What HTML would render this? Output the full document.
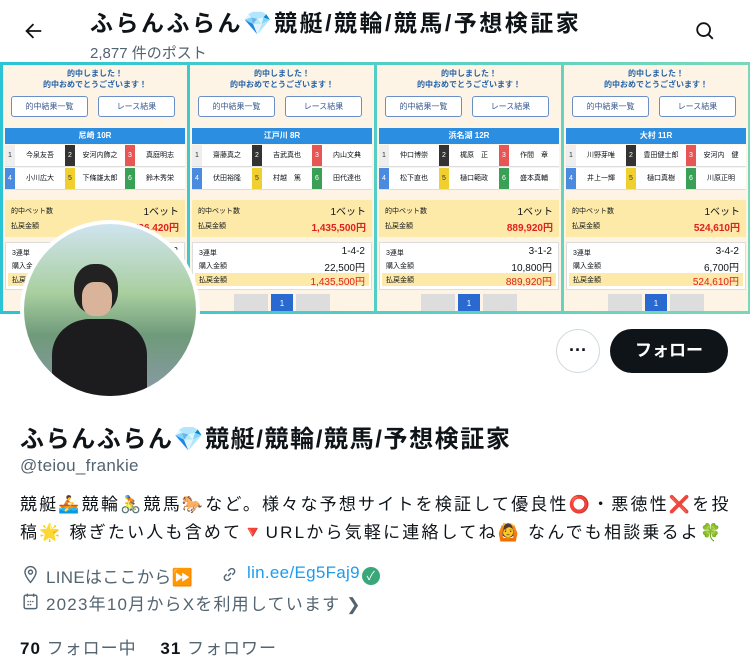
<!DOCTYPE html>
<html><head><meta charset="utf-8"><style>
*{margin:0;padding:0;box-sizing:border-box}
body{width:750px;height:666px;overflow:hidden;background:#fff;font-family:"Liberation Sans","Noto Sans CJK JP",sans-serif;color:#0f1419;position:relative}
.abs{position:absolute}
.banner{left:0;top:62px;width:750px;height:252px;background:linear-gradient(90deg,#2ac4d4,#7ad8b8);padding:3px}
.panel{position:absolute;top:3px;width:184px;height:246px;background:#fdf4e6;overflow:hidden;font-size:8px}
.hd{position:absolute;left:0;right:0;top:3px;text-align:center;color:#2563a8;font-weight:bold;font-size:8px;line-height:11px}
.btn{position:absolute;top:31px;width:77px;height:21px;border:1px solid #6a8fc8;border-radius:3px;background:#fff;color:#3a5a90;text-align:center;line-height:19px;font-size:8px}
.bar{position:absolute;left:2px;right:2px;top:63px;height:16px;background:#2b8ee0;color:#fff;text-align:center;font-weight:bold;line-height:16px;font-size:8px}
.row{position:absolute;left:2px;right:2px;height:22px;background:#fff;border-bottom:1px solid #ddd;display:flex;font-size:7px;line-height:22px}
.row span{flex:1;text-align:center}
.row i{width:10px;font-style:normal;text-align:center;color:#fff}
.yb{position:absolute;left:2px;right:2px;top:135px;height:37px;background:#fde9a8;font-size:7px}
.wb{position:absolute;left:2px;right:2px;top:177px;height:48px;background:#fff;border:1px solid #ddd;font-size:7px}
.red{color:#e02020;font-weight:bold}
.pg{position:absolute;top:229px;height:20px}
.meta{font-size:17px;color:#536471;white-space:nowrap;letter-spacing:0.3px}
</style></head><body>
<svg class="abs" style="left:22px;top:20px" width="22" height="22" viewBox="0 0 24 24"><path d="M7.4 13l5.8 5.8-1.4 1.4L3.6 12l8.2-8.2 1.4 1.4L7.4 11H21v2z" fill="#0f1419"/></svg>
<div class="abs" style="left:90px;top:4px;font-size:23px;font-weight:bold;white-space:nowrap;letter-spacing:2.5px">ふらんふらん💎競艇/競輪/競馬/予想検証家</div>
<div class="abs" style="left:90px;top:42px;font-size:15px;color:#536471">2,877 件のポスト</div>
<svg class="abs" style="left:694px;top:20px" width="22" height="22" viewBox="0 0 24 24"><circle cx="10.5" cy="10.5" r="7" fill="none" stroke="#0f1419" stroke-width="2"/><path d="M15.5 15.5l5 5" stroke="#0f1419" stroke-width="2"/></svg>
<div class="abs banner">
<div class="panel" style="left:3px"></div>
<div class="panel" style="left:190px"></div>
<div class="panel" style="left:377px"></div>
<div class="panel" style="left:564px"></div>
</div>
<div id="pp"></div>
<script>
var d=[["尼崎 10R","今泉友吾","安河内飾之","真庭明志","小川広大","下條雄太郎","鈴木秀栄","1,736,420円","3","","",""],
["江戸川 8R","齋藤真之","吉武真也","内山文典","伏田裕隆","村越　篤","田代達也","1,435,500円","1-4-2","22,500円","1,435,500円"],
["浜名湖 12R","仲口博崇","梶原　正","作間　章","松下直也","樋口範政","盛本真輔","889,920円","3-1-2","10,800円","889,920円"],
["大村 11R","川野芽唯","豊田健士郎","安河内　健","井上一輝","樋口真樹","川原正明","524,610円","3-4-2","6,700円","524,610円"]];
var cols=["#eee","#333","#e85555","#4a8be0","#f0d030","#3aa055"],tc=["#333","#fff","#fff","#fff","#333","#fff"];
var h="";
d.forEach(function(p,k){var L=3+k*187;var o='<div class="abs" style="left:'+L+'px;top:65px;width:184px;height:246px;overflow:hidden;font-size:8px">';
o+='<div class="hd">的中しました！<br>的中おめでとうございます！</div>';
o+='<div class="btn" style="left:8px">的中結果一覧</div><div class="btn" style="left:95px">レース結果</div>';
o+='<div class="bar">'+p[0]+'</div>';
for(var r=0;r<2;r++){o+='<div class="row" style="top:'+(80+r*23)+'px">';for(var c=0;c<3;c++){var n=r*3+c;o+='<i style="background:'+cols[n]+';color:'+tc[n]+'">'+(n+1)+'</i><span>'+p[1+n]+'</span>';}o+='</div>';}
o+='<div class="yb"><div class="abs" style="left:6px;top:6px">的中ベット数</div><div class="abs" style="right:6px;top:3px;font-size:10px">1ベット</div><div class="abs" style="left:6px;top:21px">払戻金額</div><div class="abs red" style="right:6px;top:19px;font-size:10px">'+p[7]+'</div></div>';
o+='<div class="wb"><div class="abs" style="left:6px;top:5px">3連単</div><div class="abs" style="right:6px;top:3px;font-size:10px">'+p[8]+'</div><div class="abs" style="left:6px;top:18px">購入金額</div><div class="abs" style="right:6px;top:16px;font-size:10px">'+p[9]+'</div><div class="abs" style="left:2px;right:2px;top:30px;height:13px;background:#fde9a8"></div><div class="abs" style="left:6px;top:32px">払戻金額</div><div class="abs" style="right:6px;top:30px;font-size:10px;color:#e02020">'+(p[10]||"")+'</div></div>';
o+='<div class="pg" style="left:44px;width:34px;background:#ddd"></div><div class="pg" style="left:81px;width:22px;background:#2a6ad0;color:#fff;text-align:center;line-height:20px">1</div><div class="pg" style="left:106px;width:34px;background:#ddd"></div>';
o+='</div>';h+=o;});
document.getElementById("pp").innerHTML=h;
</script>
<div class="abs" style="left:20px;top:220px;width:180px;height:180px;border-radius:50%;background:#fff;padding:4px">
<div style="width:100%;height:100%;border-radius:50%;overflow:hidden;background:linear-gradient(180deg,#cfe4ef 0%,#a9cfa0 40%,#6f9a7a 65%,#8a9aa8 100%);position:relative">
<div class="abs" style="left:50px;top:40px;width:44px;height:50px;border-radius:45%;background:#222"></div>
<div class="abs" style="left:58px;top:58px;width:30px;height:34px;border-radius:40%;background:#d9b49a"></div>
<div class="abs" style="left:28px;top:95px;width:95px;height:90px;border-radius:40% 40% 0 0;background:#1c1c1f"></div>
</div></div>
<div class="abs" style="left:556px;top:329px;width:44px;height:44px;border:1px solid #cfd9de;border-radius:50%;text-align:center;line-height:40px;font-weight:bold;font-size:18px">···</div>
<div class="abs" style="left:610px;top:329px;width:118px;height:44px;background:#0f1419;border-radius:22px;color:#fff;font-weight:bold;font-size:17px;text-align:center;line-height:44px">フォロー</div>
<div class="abs" style="left:20px;top:419px;font-size:24px;font-weight:bold;white-space:nowrap;letter-spacing:1.6px">ふらんふらん💎競艇/競輪/競馬/予想検証家</div>
<div class="abs" style="left:20px;top:456px;font-size:17px;color:#536471;letter-spacing:0.3px">@teiou_frankie</div>
<div class="abs" style="left:20px;top:491px;width:720px;font-size:17px;line-height:28px;letter-spacing:2.2px">競艇🚣競輪🚴競馬🐎など。様々な予想サイトを検証して優良性⭕・悪徳性❌を投稿🌟 稼ぎたい人も含めて🔻URLから気軽に連絡してね🙆 なんでも相談乗るよ🍀</div>
<svg class="abs" style="left:21px;top:565px" width="19" height="19" viewBox="0 0 24 24"><path d="M12 2a7 7 0 0 0-7 7c0 5 7 13 7 13s7-8 7-13a7 7 0 0 0-7-7zm0 9.5a2.5 2.5 0 1 1 0-5 2.5 2.5 0 0 1 0 5z" fill="none" stroke="#536471" stroke-width="1.8"/></svg>
<div class="abs meta" style="left:46px;top:563px">LINEはここから⏩</div>
<svg class="abs" style="left:220px;top:565px" width="19" height="19" viewBox="0 0 24 24"><path d="M10 14l4-4M8.5 11.5l-2 2a3.5 3.5 0 0 0 5 5l2-2M15.5 12.5l2-2a3.5 3.5 0 0 0-5-5l-2 2" fill="none" stroke="#536471" stroke-width="1.8"/></svg>
<div class="abs meta" style="left:247px;top:563px;color:#1d9bf0">lin.ee/Eg5Faj9<span style="display:inline-block;width:18px;height:18px;border-radius:50%;background:#3aa77a;color:#fff;font-size:12px;text-align:center;line-height:18px;vertical-align:-2px;margin-left:2px">✓</span></div>
<svg class="abs" style="left:21px;top:592px" width="19" height="19" viewBox="0 0 24 24"><rect x="4" y="4" width="16" height="17" rx="2" fill="none" stroke="#536471" stroke-width="1.8"/><path d="M8 2v4M16 2v4" stroke="#536471" stroke-width="1.8"/><circle cx="9" cy="12" r="1" fill="#536471"/><circle cx="12" cy="12" r="1" fill="#536471"/><circle cx="15" cy="12" r="1" fill="#536471"/><circle cx="9" cy="16" r="1" fill="#536471"/><circle cx="12" cy="16" r="1" fill="#536471"/></svg>
<div class="abs meta" style="left:46px;top:590px;letter-spacing:1.2px">2023年10月からXを利用しています ❯</div>
<div class="abs meta" style="left:20px;top:634px;letter-spacing:1px"><b style="color:#0f1419">70</b> フォロー中　 <b style="color:#0f1419">31</b> フォロワー</div>
</body></html>
